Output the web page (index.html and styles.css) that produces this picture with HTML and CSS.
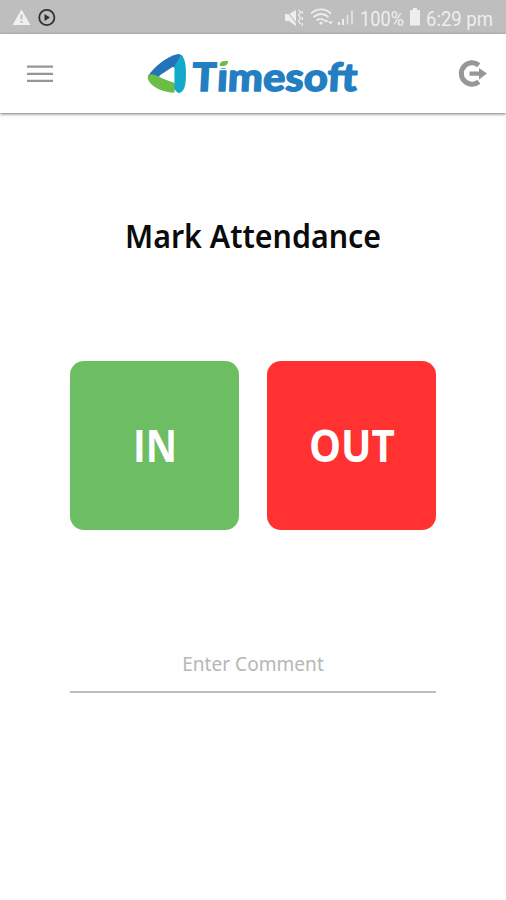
FILE: index.html
```html
<!DOCTYPE html>
<html lang="en">
<head>
<meta charset="utf-8">
<title>Timesoft</title>
<link rel="stylesheet" href="styles.css">
</head>
<body>
<div class="status">
  <svg class="notices" width="60" height="34" viewBox="0 0 60 34">
    <path d="M21.500 9.500 30.500 25H12.500Z" fill="#f0f0f0"/>
    <path d="M21.500 14.500v5M21.500 21v2" stroke="#bebebe" stroke-width="2"/>
    <circle cx="46.800" cy="17.500" r="7.600" fill="none" stroke="#303030" stroke-width="1.800"/>
    <path d="M44.500 14v7l5.500-3.500Z" fill="#303030"/>
  </svg>
  <svg class="system" width="226" height="34" viewBox="280 0 226 34">
    <g fill="#eee">
      <path d="M285 14h4l7-4v16l-7-5h-4Z"/>
      <path d="M410 10h3V8h4v2h3v15.500h-10Z"/>
      <path d="M338 22h2v3h-2zM342 19h2v6h-2z"/>
    </g>
    <path d="m286 10 11 14" stroke="#bebebe" stroke-width="1.200"/>
    <path d="m298.500 10 2 2-2 3 2 3-2 3 2 3M302.300 11v3m0 3v3m0 3v3" fill="none" stroke="#eee" stroke-width="1.300"/>
    <path d="M311 13.500c6-5.500 14-5.500 20 0M313.500 17c5-4 10-4 15 0M316.500 20.500c3-2.500 5-2.500 8 0" fill="none" stroke="#eee" stroke-width="1.800"/>
    <path d="m319 23 2-1.500 2 1.500-2 2ZM324 22l2.200-3 2.200 3ZM328 21.500h5l-2.500 3Z" fill="#eee"/>
    <path d="M347.500 15v9.500M352 10.500v14" fill="none" stroke="#eee" stroke-opacity=".75" stroke-width="1.800"/>
    <text x="360" y="26" textLength="44" lengthAdjust="spacingAndGlyphs">100%</text>
    <text x="426" y="26" textLength="67" lengthAdjust="spacingAndGlyphs">6:29 pm</text>
  </svg>
</div>
<header class="bar">
  <svg class="menu" width="26" height="18" viewBox="0 0 26 18"><path d="M0 1.700h26M0 8.800h26M0 15.900h26" stroke="#969696" stroke-width="2.200"/></svg>
  <svg class="logo" width="220" height="64" viewBox="145 42 220 64">
    <path d="M148 76C155 66 166 57 177 54.200q4-.7 6 2.800l-8 10-15 9-4 2Z" fill="#2473b9"/>
    <path d="M174 67 181 55c3.500 2 5 9 5 18 0 12-1.500 20-8 20l-5-5 1.500-6Z" fill="#12a9cb"/>
    <path d="M148 76c1-2 4-2 7-1l10 4.500 9.500 3.500v9.800c-10-.5-20-4-25-10.800q-2.500-4-1.500-6Z" fill="#6cbd45"/>
    <path d="M159.500 75.500 172.500 67q2-.5 2 2l-.5 12.500Z" fill="#fff"/>
    <text class="brand" transform="translate(191.500 90.500) skewX(-3)" textLength="165" lengthAdjust="spacingAndGlyphs">Timesoft</text>
    <path d="M217.300 58h12v10.300h-12Z" fill="#fff"/>
    <path d="M219.700 66q0-5 5-5h3.500q-.5 5-5 5Z" fill="#6cbd45"/>
  </svg>
  <svg class="logout" width="30" height="30" viewBox="458 59 30 30">
    <path d="M478.800 65.200a10.700 10.700 0 1 0 0 16.600" fill="none" stroke="#979797" stroke-width="5"/>
    <path d="M469.500 71.500h9.500V68l8 5.500-8 6v-3.800h-9.500Z" fill="#979797"/>
  </svg>
</header>
<main>
  <h1><svg width="300" height="60" viewBox="-22 -10 300 60"><text x="0" y="30" textLength="256" lengthAdjust="spacingAndGlyphs">Mark Attendance</text></svg></h1>
  <div class="actions">
    <button class="in"><svg width="100" height="70" viewBox="0 0 100 70"><text x="28" y="51" textLength="44" lengthAdjust="spacingAndGlyphs">IN</text></svg></button>
    <button class="out"><svg width="120" height="70" viewBox="0 0 120 70"><text x="17" y="51" textLength="86" lengthAdjust="spacingAndGlyphs">OUT</text></svg></button>
  </div>
  <div class="comment">Enter Comment</div>
</main>
</body>
</html>
```
FILE: styles.css
```css
* { box-sizing: border-box; }
body { margin: 0; height: 900px; background: #fefefe; font-family: "Noto Sans", sans-serif; overflow: hidden; }
svg { display: block; }
.status { height: 34px; background: #bebebe; display: flex; justify-content: space-between; }
.system text { font: 400 21px Roboto, sans-serif; fill: #eee; }
.bar { height: 79px; background: #fff; display: flex; align-items: center; padding: 0 18px 0 27px; box-shadow: 0 1px 3px rgba(0,0,0,.55); }
.logo { margin-left: 92px; }
.brand { font: 900 39px Lato, sans-serif; fill: #237fc1; stroke: #237fc1; stroke-width: 1.3px; stroke-linejoin: round; }
.logout { margin-left: auto; }
main { width: 366px; margin: 0 auto; padding-top: 95px; }
h1 { margin: 0; display: flex; justify-content: center; }
h1 text { font: 600 33px "Noto Sans", sans-serif; fill: #0b0b0b; }
.actions { margin-top: 93px; display: grid; grid-template-columns: 169px 169px; justify-content: space-between; }
button { height: 169px; border: 0; border-radius: 14px; padding: 0; display: flex; align-items: center; justify-content: center; }
button text { font: 700 44px "Open Sans", sans-serif; fill: #fff; }
.in { background: #6dbe62; }
.out { background: #ff3131; }
.comment { margin-top: 121px; height: 42px; border-bottom: 2px solid #bdbdbd; text-align: center; color: #b7b7b7; font-size: 19px; line-height: 26px; letter-spacing: .05px; }
```
